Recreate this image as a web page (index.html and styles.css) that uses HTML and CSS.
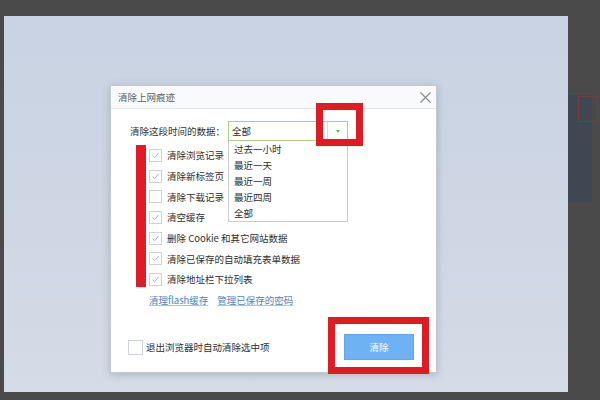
FILE: index.html
```html
<!DOCTYPE html>
<html lang="zh-CN">
<head>
<meta charset="utf-8">
<title>清除上网痕迹</title>
<link rel="stylesheet" href="styles.css">
</head>
<body>
<div class="stage">
  <div class="screen">
    <div class="dialog">
      <div class="titlebar">
        <span class="title">清除上网痕迹</span>
        <svg class="close" width="11" height="11" viewBox="0 0 11 11"><path d="M0.5 0.5L10.5 10.5M10.5 0.5L0.5 10.5" stroke="#8a8a8a" stroke-width="1.1" fill="none"/></svg>
      </div>
      <div class="body">
        <div class="range-row">
          <span class="range-label">清除这段时间的数据：</span>
          <div class="select">
            <span class="select-value">全部</span>
            <span class="select-arrow"><span class="tri"></span></span>
            <ul class="dropdown">
              <li>过去一小时</li>
              <li>最近一天</li>
              <li>最近一周</li>
              <li>最近四周</li>
              <li>全部</li>
            </ul>
          </div>
        </div>
        <ul class="options">
          <li class="opt"><span class="cb checked"><svg viewBox="0 0 13 13"><path d="M3 6.5L5.5 9.2L10.2 3.5" stroke="#8db6d6" stroke-width="1.1" fill="none"/></svg></span><span class="opt-text">清除浏览记录</span></li>
          <li class="opt"><span class="cb checked"><svg viewBox="0 0 13 13"><path d="M3 6.5L5.5 9.2L10.2 3.5" stroke="#8db6d6" stroke-width="1.1" fill="none"/></svg></span><span class="opt-text">清除新标签页</span></li>
          <li class="opt"><span class="cb"></span><span class="opt-text">清除下载记录</span></li>
          <li class="opt"><span class="cb checked"><svg viewBox="0 0 13 13"><path d="M3 6.5L5.5 9.2L10.2 3.5" stroke="#8db6d6" stroke-width="1.1" fill="none"/></svg></span><span class="opt-text">清空缓存</span></li>
          <li class="opt"><span class="cb checked"><svg viewBox="0 0 13 13"><path d="M3 6.5L5.5 9.2L10.2 3.5" stroke="#8db6d6" stroke-width="1.1" fill="none"/></svg></span><span class="opt-text">删除 Cookie 和其它网站数据</span></li>
          <li class="opt"><span class="cb checked"><svg viewBox="0 0 13 13"><path d="M3 6.5L5.5 9.2L10.2 3.5" stroke="#8db6d6" stroke-width="1.1" fill="none"/></svg></span><span class="opt-text">清除已保存的自动填充表单数据</span></li>
          <li class="opt"><span class="cb checked"><svg viewBox="0 0 13 13"><path d="M3 6.5L5.5 9.2L10.2 3.5" stroke="#8db6d6" stroke-width="1.1" fill="none"/></svg></span><span class="opt-text">清除地址栏下拉列表</span></li>
          <li class="links"><a class="link">清理flash缓存</a><a class="link">管理已保存的密码</a></li>
        </ul>
      </div>
      <div class="footer">
        <label class="exit-opt"><span class="cb big"></span>退出浏览器时自动清除选中项</label>
        <button class="clear-btn">清除</button>
      </div>
      <div class="mark mark-bar"></div>
      <div class="mark mark-box1"></div>
      <div class="mark mark-box2"></div>
    </div>
  </div>
  <div class="side">
    <div class="side-card"></div>
    <div class="side-mark"></div>
  </div>
</div>
</body>
</html>
```

FILE: styles.css
```css
html, body {
  margin: 0;
  padding: 0;
}
body {
  width: 600px;
  height: 400px;
  overflow: hidden;
  background: #4a4a4a;
  font-family: "Noto Sans CJK SC", "Noto Sans", sans-serif;
  color: #333;
}
.stage {
  display: grid;
  grid-template-columns: 4px 564px 32px;
  grid-template-rows: 16px 376px 8px;
  width: 600px;
  height: 400px;
}
.screen {
  grid-column: 2;
  grid-row: 2;
  background: linear-gradient(180deg, #c9d3e3 0%, #cfd7e4 60%, #d5dce7 100%);
  padding: 69px 0 0 106px;
  box-sizing: border-box;
}
.side {
  grid-column: 3;
  grid-row: 2;
  position: relative;
  padding-top: 79px;
}
.side-card {
  width: 24px;
  height: 107px;
  background: #3f4752;
}
.side-mark {
  position: absolute;
  left: 10px;
  top: 80px;
  width: 18px;
  height: 24px;
  border: 1px solid #7a3b3e;
}
.dialog {
  position: relative;
  width: 327px;
  height: 288px;
  box-sizing: border-box;
  background: #fff;
  border: 1px solid #c2c8d0;
  box-shadow: 0 2px 8px rgba(60, 70, 90, 0.25);
  display: flex;
  flex-direction: column;
}
.titlebar {
  height: 23px;
  box-sizing: border-box;
  border-bottom: 1px solid #e2e4e8;
  background: #f9fafb;
  display: flex;
  align-items: center;
  justify-content: space-between;
  padding: 0 5px 0 7px;
}
.title {
  font-size: 9.5px;
  line-height: 12px;
  color: #5e5e5e;
}
.close {
  display: block;
}
.body {
  padding: 12px 0 0 19px;
}
.range-row {
  display: flex;
  align-items: center;
  height: 20px;
}
.range-label {
  width: 98px;
  font-size: 9.5px;
  line-height: 12px;
  color: #2e2e2e;
}
.select {
  position: relative;
  width: 120px;
  height: 20px;
  box-sizing: border-box;
  border: 1px solid #a9d08e;
  display: flex;
  align-items: center;
}
.select-value {
  flex: 1;
  padding-left: 3px;
  font-size: 9.5px;
  line-height: 12px;
  color: #2e2e2e;
}
.select-arrow {
  width: 19px;
  height: 18px;
  border-left: 1px solid #d8dde2;
  display: flex;
  align-items: center;
  justify-content: center;
}
.tri {
  width: 0;
  height: 0;
  border-left: 2.5px solid transparent;
  border-right: 2.5px solid transparent;
  border-top: 3.5px solid #6eb34a;
}
.dropdown {
  position: absolute;
  top: 19px;
  left: -1px;
  width: 120px;
  box-sizing: border-box;
  margin: 0;
  padding: 0 5px;
  list-style: none;
  background: #fff;
  border: 1px solid #c9cccf;
  border-top: none;
  z-index: 2;
}
.dropdown li {
  height: 16px;
  line-height: 16px;
  font-size: 9.5px;
  color: #2e2e2e;
}
.options {
  list-style: none;
  margin: 4px 0 0;
  padding: 0 0 0 19px;
}
.opt {
  height: 20.7px;
  display: flex;
  align-items: center;
  font-size: 9.5px;
  line-height: 12px;
  color: #2e2e2e;
}
.opt-text {
  white-space: nowrap;
}
.cb {
  width: 13px;
  height: 13px;
  box-sizing: border-box;
  border: 1px solid #cfd3d8;
  background: #fff;
  margin-right: 5px;
  flex: none;
  display: flex;
}
.cb svg {
  width: 11px;
  height: 11px;
}
.cb.big {
  width: 15px;
  height: 15px;
  margin-right: 3px;
}
.links {
  height: 20.7px;
  display: flex;
  align-items: center;
  gap: 9px;
  font-size: 9.5px;
  line-height: 12px;
}
.link {
  color: #4d84c4;
  text-decoration: underline;
  text-decoration-color: #a9c4e2;
  text-underline-offset: 1px;
}
.footer {
  margin-top: auto;
  display: flex;
  align-items: center;
  justify-content: space-between;
  padding: 0 22px 12px 17px;
}
.exit-opt {
  display: flex;
  align-items: center;
  font-size: 9.5px;
  line-height: 12px;
  color: #2e2e2e;
}
.clear-btn {
  width: 70px;
  height: 26px;
  border: 1px solid #62a7ec;
  background: #6fb2f3;
  color: #fff;
  font-family: "Noto Sans CJK SC", "Noto Sans", sans-serif;
  font-size: 9.5px;
  padding: 0;
}
.mark {
  position: absolute;
  box-sizing: border-box;
  z-index: 3;
}
.mark-bar {
  left: 25px;
  top: 59px;
  width: 10px;
  height: 142px;
  background: #df1c26;
}
.mark-box1 {
  left: 205px;
  top: 17px;
  width: 47px;
  height: 43px;
  border: 7px solid #df1c26;
}
.mark-box2 {
  left: 217px;
  top: 231px;
  width: 101px;
  height: 57px;
  border: 7px solid #df1c26;
}
```
